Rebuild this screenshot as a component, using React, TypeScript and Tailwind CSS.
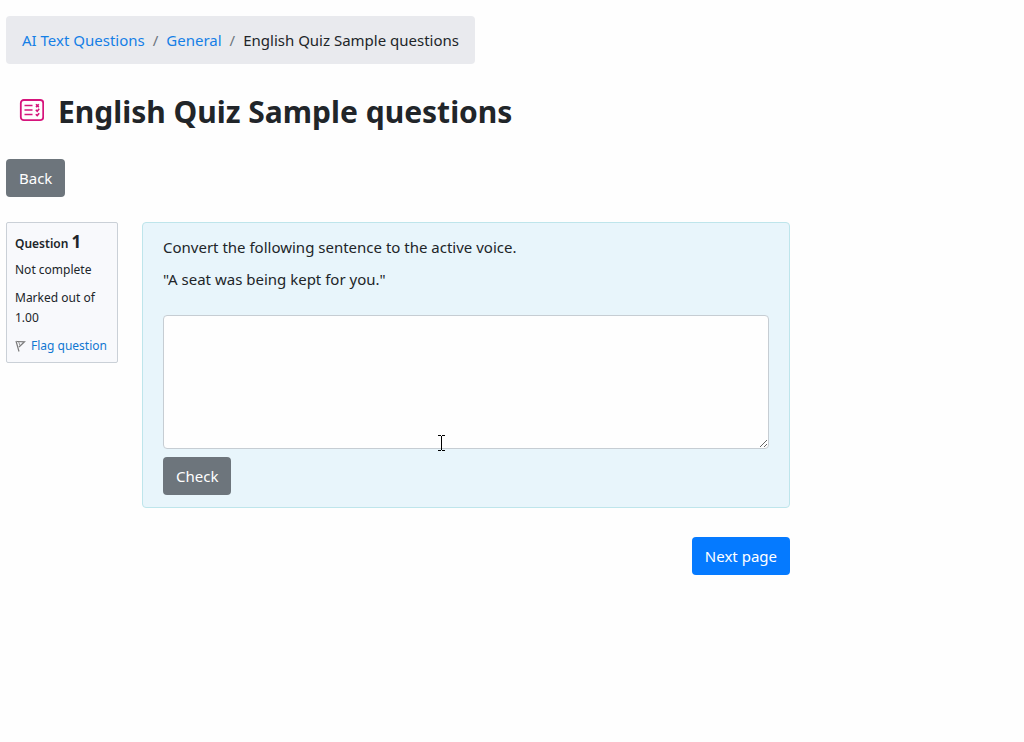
const crumbs = [
    { label: "AI Text Questions", href: "#course" },
    { label: "General", href: "#general" },
];

function QuizIcon() {
    return (
        <svg viewBox="0 0 26 24" className="mb-1 h-6 w-[26px] shrink-0" fill="none" stroke="#d6147c" aria-hidden="true">
            <rect x="2.8" y="2" width="22.4" height="20.2" rx="3" strokeWidth="1.8" />
            <path d="M6.5 7.5h8M6.5 12h8M6.5 16.5h8" strokeWidth="1.5" />
            <path d="M18 6.3l2.8 2.8M20.8 6.3L18 9.1M17.8 11.8l1.4 1.4 2-2.4" strokeWidth="1.6" />
            <path d="M17.8 16.2l1.4 1.4 2-2.4" strokeWidth="1.6" />
        </svg>
    );
}

function FlagIcon() {
    return (
        <svg viewBox="0 0 12 14" className="mr-1 h-3.5 w-3 shrink-0" fill="none" stroke="#7b7b7b" aria-hidden="true">
            <path d="M1 2l3 10.5M2 2.5l7.5.3L4 8" strokeWidth="1.2" />
            <path d="M3.5 2.5l1.5 4" strokeWidth="0.8" />
        </svg>
    );
}

// I-beam pointer resting over the answer box
function TextCursor() {
    return (
        <svg
            viewBox="0 0 8 16"
            className="pointer-events-none absolute -bottom-0.5 left-[274px] h-4 w-2"
            fill="none"
            stroke="#000"
            shapeRendering="crispEdges"
            aria-hidden="true"
        >
            <path d="M1 .5h3M5 .5h3M4.5 1v14M1 15.5h3M5 15.5h3" />
        </svg>
    );
}

function QuestionInfo() {
    return (
        <aside className="w-28 shrink-0 rounded-xs border border-[#cad0d7] bg-[#f8f9fc] px-2 pt-[9px] pb-1.5 text-[12px] leading-5">
            <h3 className="font-semibold">
                Question <span className="text-[17px] font-bold">1</span>
            </h3>
            <p className="mt-1.5">Not complete</p>
            <p className="mt-2">Marked out of 1.00</p>
            <a href="#flag" className="mt-2 flex items-center whitespace-nowrap text-[#1177d1]">
                <FlagIcon />
                Flag question
            </a>
        </aside>
    );
}

export default function App() {
    return (
        <div className="min-h-screen bg-[#fefefe] px-1.5 pt-4 font-['Noto_Sans','Open_Sans',sans-serif] text-[15px] leading-6 text-[#212529]">
            <nav aria-label="Breadcrumb" className="w-fit rounded bg-[#e9eaee] px-4 py-3">
                <ol className="flex">
                    {crumbs.map((crumb) => (
                        <li key={crumb.label} className="flex">
                            <a href={crumb.href} className="text-[#157fe6]">{crumb.label}</a>
                            <span className="px-2 text-[#6c757d]">/</span>
                        </li>
                    ))}
                    <li aria-current="page">English Quiz Sample questions</li>
                </ol>
            </nav>

            <header className="mt-7 flex items-center gap-3.5 pl-3">
                <QuizIcon />
                <h1 className="text-[30px] leading-10 font-bold">English Quiz Sample questions</h1>
            </header>

            <button type="button" className="mt-[27px] h-[38px] rounded bg-[#6d757c] px-[13px] text-white">
                Back
            </button>

            <main className="mt-[25px] max-w-[784px]">
                <div className="flex items-start gap-6">
                    <QuestionInfo />
                    <section className="min-w-0 flex-1 rounded border border-[#bee5eb] bg-[#e8f5fb] px-5 py-3">
                        <div id="prompt">
                            <p>Convert the following sentence to the active voice.</p>
                            <p className="mt-2">"A seat was being kept for you."</p>
                        </div>
                        <div className="relative mt-6">
                            <textarea
                                aria-labelledby="prompt"
                                className="block h-[134px] w-full rounded border border-[#c6cdd3] bg-[#fefefe] px-3 py-1.5"
                            />
                            <TextCursor />
                        </div>
                        <button type="button" className="mt-2 h-[38px] rounded bg-[#6d757c] px-[13px] text-white">
                            Check
                        </button>
                    </section>
                </div>
                <div className="mt-[29px] flex justify-end">
                    <button type="button" className="h-[38px] rounded bg-[#057aff] px-[13px] text-white">
                        Next page
                    </button>
                </div>
            </main>
        </div>
    );
}
